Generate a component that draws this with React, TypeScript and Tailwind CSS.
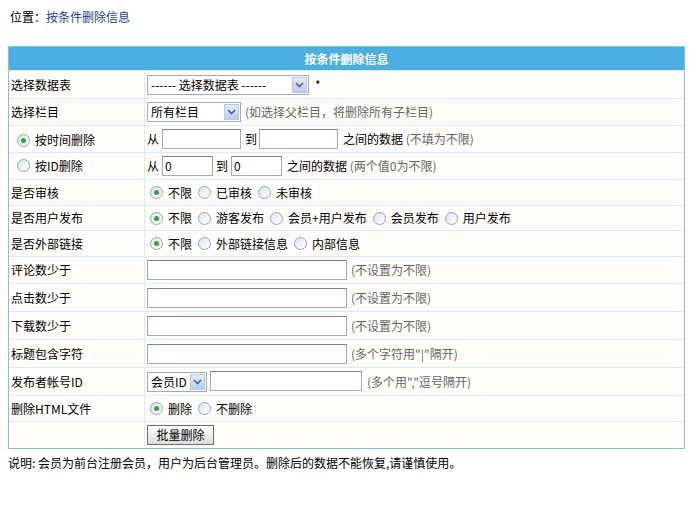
const font = { fontFamily: '"Noto Sans CJK SC", "Liberation Sans", sans-serif' };

function Radio({ checked }: { checked?: boolean }) {
  return (
    <span className="inline-flex h-[13px] w-[13px] items-center justify-center rounded-full border border-[#8fa6c4] bg-gradient-to-br from-[#dfe5ee] to-white">
      {checked && <span className="h-[5px] w-[5px] rounded-full bg-[#2fa82f]" />}
    </span>
  );
}

function Opt({ label, checked }: { label: string; checked?: boolean }) {
  return (
    <span className="inline-flex items-center gap-[5px] mr-[6px]">
      <Radio checked={checked} />
      <span>{label}</span>
    </span>
  );
}

function Select({ text, width }: { text: string; width: string }) {
  return (
    <span className={`inline-flex h-[20px] items-center justify-between border border-[#a5acb5] bg-white pl-[3px] pr-[1px] ${width}`}>
      <span>{text}</span>
      <span className="flex h-[16px] w-[15px] items-center justify-center border border-[#b7c7e7] bg-gradient-to-b from-[#e3ebfb] to-[#b9cbf0]">
        <svg width="9" height="6" viewBox="0 0 9 6">
          <path d="M1 1l3.5 3.5L8 1" stroke="#4d6185" strokeWidth="1.6" fill="none" />
        </svg>
      </span>
    </span>
  );
}

function Input({ width, value }: { width: string; value?: string }) {
  return (
    <span className={`inline-flex h-[20px] items-center border border-[#a5acb5] border-t-[#7c838c] bg-white px-[2px] ${width}`}>
      {value}
    </span>
  );
}

function Hint({ children }: { children: string }) {
  return <span className="text-[#666666]">{children}</span>;
}

function Row({ h, label, children }: { h: string; label: React.ReactNode; children: React.ReactNode }) {
  return (
    <div className={`grid grid-cols-[136px_1fr] border-t border-[#d6edf3] ${h}`}>
      <div className="flex items-center border-r border-[#d6edf3] pl-[2px]">{label}</div>
      <div className="flex items-center pl-[2px]">{children}</div>
    </div>
  );
}

export default function App() {
  return (
    <div className="min-h-[531px] w-[700px] bg-white text-[12px] leading-none text-black" style={font}>
      <div className="px-[10px] pt-[11px] pb-[23px]">
        位置：<span className="text-[#1b3f93]">按条件删除信息</span>
      </div>

      <div className="ml-[8px] w-[677px] border border-[#7fc5d2] bg-[#fffdfa]">
        <div className="flex h-[23px] items-center justify-center bg-[#4bb0e0] font-bold text-white">按条件删除信息</div>

        <Row h="h-[28px]" label="选择数据表">
          <Select text="------ 选择数据表 ------" width="w-[162px]" />
          <span className="ml-[6px]">*</span>
        </Row>
        <Row h="h-[27px]" label="选择栏目">
          <Select text="所有栏目" width="w-[94px]" />
          <span className="ml-[4px]"><Hint>(如选择父栏目，将删除所有子栏目)</Hint></span>
        </Row>
        <Row h="h-[27px]" label={<span className="ml-[6px]"><Opt label="按时间删除" checked /></span>}>
          <span className="mr-[3px]">从</span>
          <Input width="w-[79px]" />
          <span className="ml-[4px] mr-[2px]">到</span>
          <Input width="w-[79px]" />
          <span className="ml-[5px]">之间的数据 <Hint>(不填为不限)</Hint></span>
        </Row>
        <Row h="h-[27px]" label={<span className="ml-[6px]"><Opt label="按ID删除" /></span>}>
          <span className="mr-[3px]">从</span>
          <Input width="w-[51px]" value="0" />
          <span className="ml-[3px] mr-[3px]">到</span>
          <Input width="w-[51px]" value="0" />
          <span className="ml-[5px]">之间的数据 <Hint>(两个值0为不限)</Hint></span>
        </Row>
        <Row h="h-[26px]" label="是否审核">
          <span className="ml-[3px] flex items-center">
            <Opt label="不限" checked />
            <Opt label="已审核" />
            <Opt label="未审核" />
          </span>
        </Row>
        <Row h="h-[25px]" label="是否用户发布">
          <span className="ml-[3px] flex items-center">
            <Opt label="不限" checked />
            <Opt label="游客发布" />
            <Opt label="会员+用户发布" />
            <Opt label="会员发布" />
            <Opt label="用户发布" />
          </span>
        </Row>
        <Row h="h-[26px]" label="是否外部链接">
          <span className="ml-[3px] flex items-center">
            <Opt label="不限" checked />
            <Opt label="外部链接信息" />
            <Opt label="内部信息" />
          </span>
        </Row>
        <Row h="h-[27px]" label="评论数少于">
          <Input width="w-[200px]" />
          <span className="ml-[4px]"><Hint>(不设置为不限)</Hint></span>
        </Row>
        <Row h="h-[28px]" label="点击数少于">
          <Input width="w-[200px]" />
          <span className="ml-[4px]"><Hint>(不设置为不限)</Hint></span>
        </Row>
        <Row h="h-[28px]" label="下载数少于">
          <Input width="w-[200px]" />
          <span className="ml-[4px]"><Hint>(不设置为不限)</Hint></span>
        </Row>
        <Row h="h-[28px]" label="标题包含字符">
          <Input width="w-[200px]" />
          <span className="ml-[4px]"><Hint>(多个字符用"|"隔开)</Hint></span>
        </Row>
        <Row h="h-[28px]" label="发布者帐号ID">
          <Select text="会员ID" width="w-[60px]" />
          <span className="ml-[3px]"><Input width="w-[152px]" /></span>
          <span className="ml-[5px]"><Hint>(多个用","逗号隔开)</Hint></span>
        </Row>
        <Row h="h-[26px]" label="删除HTML文件">
          <span className="ml-[3px] flex items-center">
            <Opt label="删除" checked />
            <Opt label="不删除" />
          </span>
        </Row>
        <Row h="h-[27px]" label="">
          <button className="h-[20px] w-[67px] border border-[#6f6f6f] bg-gradient-to-b from-white to-[#dcdcdc] text-[12px] leading-none">批量删除</button>
        </Row>
      </div>

      <div className="px-[8px] pt-[8px]">说明: 会员为前台注册会员，用户为后台管理员。删除后的数据不能恢复,请谨慎使用。</div>
    </div>
  );
}
